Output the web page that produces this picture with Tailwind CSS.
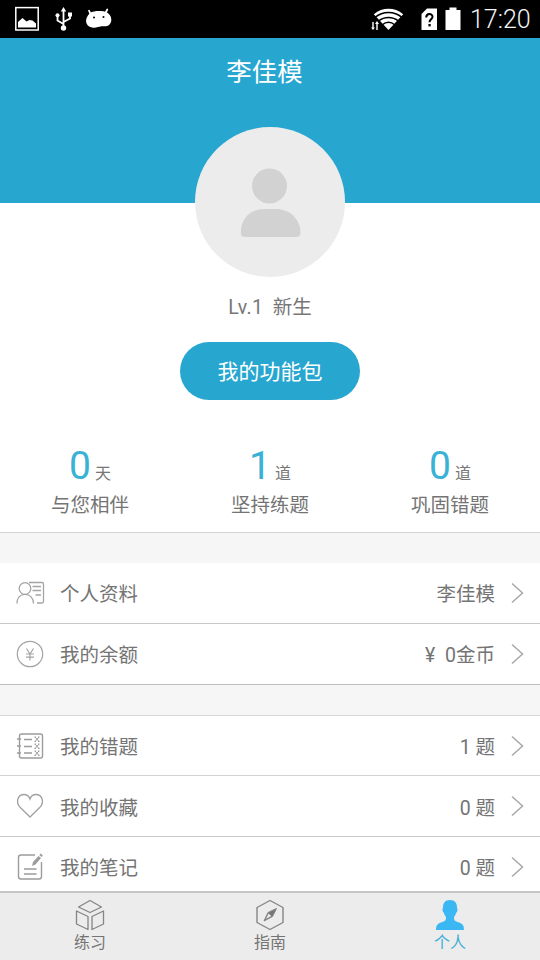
<!DOCTYPE html>
<html lang="zh-CN">
<head>
<meta charset="utf-8">
<meta name="viewport" content="width=540">
<title>个人</title>
<script src="https://cdn.jsdelivr.net/npm/@tailwindcss/browser@4"></script>
</head>
<body class="w-[540px] h-[960px] overflow-hidden bg-white font-[Roboto,'Noto_Sans_CJK_SC',sans-serif] text-[#747474]">
<div class="flex h-full flex-col">
  <!-- Status bar -->
  <header class="flex h-[38px] shrink-0 items-center justify-between bg-black text-white">
    <svg width="120" height="38" fill="none" stroke="#fff">
      <rect x="15.8" y="7.6" width="22.400" height="22.400" stroke-width="1.5"/>
      <path d="M18 27.500V22l4.500-4 4 3.500 3-1.500 3 .5 3.500 3v4z" fill="#fff" stroke="none"/>
      <path d="M63.500 28V10M63.500 24l-6-3.500v-4M63.500 22l6.500-3.500V15" stroke-width="1.800"/>
      <path d="M60.800 11.500L63.500 7l2.700 4.500z" fill="#fff" stroke="none"/>
      <circle cx="63.500" cy="28" r="2.700" fill="#fff" stroke="none"/>
      <circle cx="57.500" cy="15.300" r="2" fill="#fff" stroke="none"/>
      <path d="M68 12.500h4v4h-4z" fill="#fff" stroke="none"/>
      <path d="M90 13c4-2.500 13-2.500 17-.5 5 3 5.500 9 2.500 12-2.500 2.500-5 1.500-8 1.800-3.500.5-5.500 2-9.500 1.200-7-1.200-8-9-2-14.500z" fill="#fff" stroke="none"/>
      <path d="M91 15l-2-4.300M105 14l2.300-4.500" stroke-width="1.800" stroke-linecap="round"/>
      <circle cx="94" cy="17.500" r="1" fill="#000" stroke="none"/><circle cx="103.500" cy="17" r="1" fill="#000" stroke="none"/>
    </svg>
    <div class="flex items-center pr-[9px]">
      <svg width="102" height="38" viewBox="368 0 102 38" fill="#fff">
        <path d="M388.500 30L373.800 14.200C382.500 7 394.500 7 403.200 14.200z"/>
        <path d="M375 17.300c8-6.500 19-6.500 27 0M378.500 21c6-4.800 14-4.800 20 0M382 25c4-3.300 9-3.300 13 0" fill="none" stroke="#000" stroke-width="1.500"/>
        <path d="M368 19h9l4.500 5v7H368z" fill="#000"/>
        <path d="M372.300 22h1.400v5.500h1.300l-2 2.500-2-2.500h1.300zM376.300 30v-6h-1.300l2-3 2 3h-1.300v6z"/>
        <path d="M427 8.500h10V30h-15.500V14z"/>
        <path d="M426.200 17.500c.2-4.500 6.300-4.400 6.300-.8 0 2.500-3 2.800-3 5.500" fill="none" stroke="#000" stroke-width="2"/>
        <path d="M428.400 24h2.300v2.400h-2.300z" fill="#000"/>
        <path d="M449.500 7.500h7V10h4v20h-15V10h4z"/>
      </svg>
      <span class="w-[61px] pt-[2px] whitespace-nowrap text-[25px] leading-[38px] text-[#f4f4f4] font-light">17:20</span>
    </div>
  </header>

  <!-- Profile -->
  <section class="flex h-[494px] shrink-0 flex-col items-center">
    <div class="h-[165px] w-full shrink-0 bg-[#27a6d0] pt-[14px] pr-[11px] text-center text-[25.500px] leading-[40px] text-white">李佳模</div>
    <div class="-mt-[76px] size-[150px] shrink-0 rounded-full bg-[#ececec]">
      <svg width="150" height="150" fill="#d2d2d2"><circle cx="74.500" cy="59" r="17.500"/><path d="M45.800 105.500C46 90 57 82 69 82h12c13 0 24 9 24.500 23.500 0 3-1.500 4.500-4.500 4.500H50c-3 0-4.200-1.500-4.200-4.500z"/></svg>
    </div>
    <p class="mt-[16px] text-[19.500px] leading-[30px] text-[#777] whitespace-pre"><span class="tracking-[0.3px]">Lv.1</span>  新生</p>
    <button class="mt-[19px] h-[58px] w-[180px] shrink-0 rounded-full bg-[#27a6d0] pt-[4px] text-[21px] text-white">我的功能包</button>
    <div class="mt-[43px] grid w-full grid-cols-3 text-center">
      <div><p class="h-[46px] text-[39px] leading-[46px] text-[#3ab2d6]">0<span class="ml-[4px] text-[16px] text-[#777]">天</span></p><p class="mt-[1px] text-[19.500px] leading-[32px]">与您相伴</p></div>
      <div><p class="h-[46px] text-[39px] leading-[46px] text-[#3ab2d6]">1<span class="ml-[4px] text-[16px] text-[#777]">道</span></p><p class="mt-[1px] text-[19.500px] leading-[32px]">坚持练题</p></div>
      <div><p class="h-[46px] text-[39px] leading-[46px] text-[#3ab2d6]">0<span class="ml-[4px] text-[16px] text-[#777]">道</span></p><p class="mt-[1px] text-[19.500px] leading-[32px]">巩固错题</p></div>
    </div>
  </section>
  <div class="h-[31px] shrink-0 border-t border-[#d4d4d4] bg-[#f6f6f6]"></div>

  <!-- Account -->
  <section class="shrink-0 text-[19.500px]">
    <div class="flex h-[61px] items-center border-b border-[#c8c8c8] pr-[16px] pl-[15px]">
      <svg width="30" height="30" fill="none" stroke="#a4a4a4" stroke-width="1.300"><circle cx="10" cy="10.500" r="5.800"/><path d="M2 25.500c0-5.500 3-9.200 8-9.200s8.500 3.700 8.500 9.200M14 4.500h13q1.500 0 1.500 1.500v17.500q0 1.500-1.500 1.500h-5M17.500 8.500H26M17.500 12.500H26M20.500 17H26"/></svg>
      <span class="ml-[15px] flex-1 pt-[4px]">个人资料</span><span class="pt-[4px]">李佳模</span>
      <svg class="ml-[16px]" width="13" height="22" fill="none" stroke="#a8a8a8" stroke-width="1.500"><path d="M1 1.500L11.500 11 1 20.500"/></svg>
    </div>
    <div class="flex h-[61px] items-center border-b border-[#bcbcbc] pr-[16px] pl-[15px]">
      <svg width="30" height="30" fill="none" stroke="#a4a4a4" stroke-width="1.200"><circle cx="15" cy="15" r="12.700"/><path d="M11.500 9.500l3.500 5.500 3.500-5.500M15 15v6.500M11 15h8M11 18.200h8"/></svg>
      <span class="ml-[15px] flex-1 pt-[4px]">我的余额</span><span class="pt-[4px] whitespace-pre">¥  0金币</span>
      <svg class="ml-[16px]" width="13" height="22" fill="none" stroke="#a8a8a8" stroke-width="1.500"><path d="M1 1.500L11.500 11 1 20.500"/></svg>
    </div>
  </section>
  <div class="h-[31px] shrink-0 border-b border-[#d8d8d8] bg-[#f6f6f6]"></div>

  <!-- Exercises -->
  <section class="h-[175px] shrink-0 overflow-hidden text-[19.500px]">
    <div class="flex h-[60px] items-center border-b border-[#d2d2d2] pr-[16px] pl-[15px]">
      <svg width="30" height="30" fill="none" stroke="#9c9c9c" stroke-width="1.400"><rect x="4.500" y="3" width="23" height="24" rx="2"/><path d="M2 8h4M2 15h4M2 22h4M9 8.500h8M9 15.500h8M9 22h8"/><path d="M20 6l4 4.500M24 6l-4 4.500M20 13l4 4.500M24 13l-4 4.500M20 20l4 4.500M24 20l-4 4.500M19.500 6h1.500M23 6h1.500M19.500 10.500h1.500M23 10.500h1.500M19.500 13h1.500M23 13h1.500M19.500 17.500h1.500M23 17.500h1.500M19.500 20h1.500M23 20h1.500M19.500 24.300h1.500M23 24.300h1.500" stroke-width="1"/></svg>
      <span class="ml-[15px] flex-1 pt-[4px]">我的错题</span><span class="pt-[4px]">1 题</span>
      <svg class="ml-[16px]" width="13" height="22" fill="none" stroke="#a8a8a8" stroke-width="1.500"><path d="M1 1.500L11.500 11 1 20.500"/></svg>
    </div>
    <div class="flex h-[61px] items-center border-b border-[#cacaca] pr-[16px] pl-[15px]">
      <svg width="30" height="30" fill="none" stroke="#a0a0a0" stroke-width="1.300"><path d="M15 26L5.300 16.500C0 11 3 3.500 9 3.500c3 0 5 1.700 6 4.500 1-2.800 3-4.500 6-4.500 6 0 9 7.500 3.700 13z"/></svg>
      <span class="ml-[15px] flex-1 pt-[5px]">我的收藏</span><span class="pt-[5px]">0 题</span>
      <svg class="ml-[16px]" width="13" height="22" fill="none" stroke="#a8a8a8" stroke-width="1.500"><path d="M1 1.500L11.500 11 1 20.500"/></svg>
    </div>
    <div class="flex h-[60px] items-center pr-[16px] pl-[15px]">
      <svg width="30" height="30" fill="none" stroke="#9c9c9c" stroke-width="1.400"><path d="M20 3H6Q3.500 3 3.500 5.500v19Q3.500 27 6 27h18q2.500 0 2.500-2.500V10M9 17h12.500M9 22h12.500"/><path d="M17 14l1-4 5.500-6 2.500 2-5.500 6.500zM24.300 3l1.500-1.500 2 2-1.300 1.500z" fill="#9c9c9c" stroke="none"/></svg>
      <span class="ml-[15px] flex-1 pt-[4px]">我的笔记</span><span class="pt-[4px]">0 题</span>
      <svg class="ml-[16px]" width="13" height="22" fill="none" stroke="#a8a8a8" stroke-width="1.500"><path d="M1 1.500L11.500 11 1 20.500"/></svg>
    </div>
  </section>

  <!-- Bottom navigation -->
  <nav class="grid h-[70px] shrink-0 grid-cols-3 border-t-2 border-[#c6c6c6] bg-[#ececec] text-center text-[16px] leading-[24px]">
    <a class="flex flex-col items-center pt-[6px]">
      <svg width="32" height="32" fill="none" stroke="#858585" stroke-width="1.300" stroke-linejoin="round"><path d="M16 1.500L27.500 8 16 13.500 4.500 8zM2.500 12L14 17.500V30.500L2.500 25zM29.500 12L18 17.500V30.500l11.500-5.500z"/></svg>
      <span>练习</span>
    </a>
    <a class="flex flex-col items-center pt-[6px]">
      <svg width="32" height="32" fill="none" stroke="#858585" stroke-width="1.400" stroke-linejoin="round"><path d="M16 1.500L29 8.500V23.500L16 30.500 3 23.500V8.500z"/><path d="M22.500 9.500l-8.500 4-4 8.500 8.500-4.500z" fill="#777" stroke-width="1"/><path d="M14.500 14.500l2.800 2.500-5.300 3z" fill="#ececec" stroke="none"/></svg>
      <span>指南</span>
    </a>
    <a class="flex flex-col items-center pt-[6px] text-[#3baed6]">
      <svg width="32" height="32" fill="#3bb7f3"><path d="M16 1c5 0 7.200 3.500 7 8 1 1 .5 4-1 5-.5 2-1.500 3.500-2 4 0 3 .5 4 3.500 5 4.500 1.300 6.500 2.500 6.500 8H2c0-5.500 2-6.700 6.500-8 3-1 3.500-2 3.500-5-.5-.5-1.500-2-2-4-1.500-1-2-4-1-5-.2-4.500 2-8 7-8z"/></svg>
      <span>个人</span>
    </a>
  </nav>
</div>
</body>
</html>
